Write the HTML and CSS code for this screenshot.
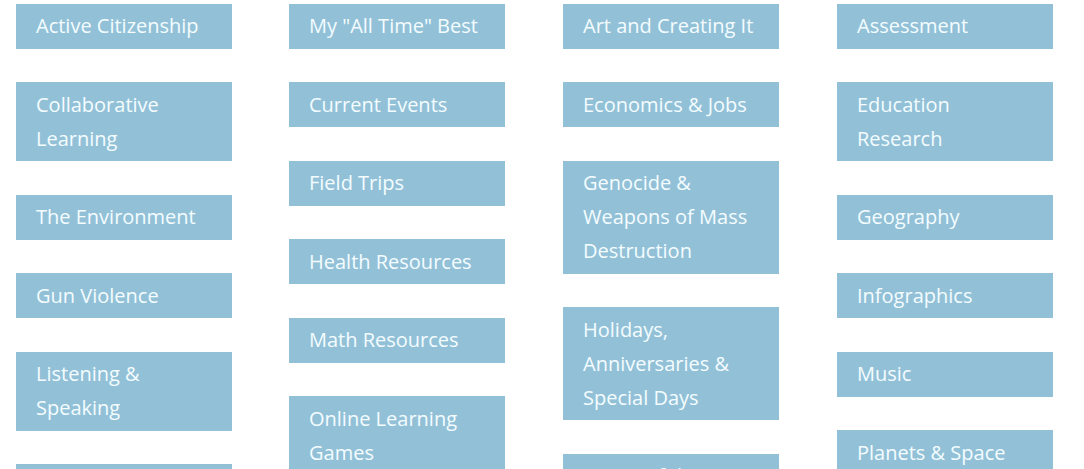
FILE: index.html
```html
<!DOCTYPE html>
<html lang="en">
<head>
<meta charset="utf-8">
<title>Topics</title>
<link rel="stylesheet" href="styles.css">
</head>
<body>
<div class="grid">
  <div class="col">
    <a class="tag">Active Citizenship</a>
    <a class="tag">Collaborative Learning</a>
    <a class="tag">The Environment</a>
    <a class="tag">Gun Violence</a>
    <a class="tag">Listening &amp; Speaking</a>
    <a class="tag">Media Literacy</a>
  </div>
  <div class="col">
    <a class="tag">My "All Time" Best</a>
    <a class="tag">Current Events</a>
    <a class="tag">Field Trips</a>
    <a class="tag">Health Resources</a>
    <a class="tag">Math Resources</a>
    <a class="tag">Online Learning Games</a>
  </div>
  <div class="col">
    <a class="tag">Art and Creating It</a>
    <a class="tag">Economics &amp; Jobs</a>
    <a class="tag">Genocide &amp; Weapons of Mass Destruction</a>
    <a class="tag">Holidays, Anniversaries &amp; Special Days</a>
    <a class="tag">Issues of the Millennium</a>
  </div>
  <div class="col">
    <a class="tag">Assessment</a>
    <a class="tag">Education Research</a>
    <a class="tag">Geography</a>
    <a class="tag">Infographics</a>
    <a class="tag">Music</a>
    <a class="tag">Planets &amp; Space</a>
  </div>
</div>
</body>
</html>
```

FILE: styles.css
```css
html, body {
  margin: 0;
  padding: 0;
  background: #ffffff;
  overflow: hidden;
}
body {
  font-family: "Open Sans", "Liberation Sans", sans-serif;
}
.grid {
  display: grid;
  grid-template-columns: 273px 274px 274px 216px;
  padding: 3.5px 0 0 16px;
  align-items: start;
}
.col {
  display: flex;
  flex-direction: column;
  gap: 33.5px;
  width: 216px;
}
.tag {
  display: block;
  background: #92c1d7;
  color: #f4fcff;
  font-size: 20px;
  line-height: 34px;
  padding: 5.5px 20px;
  text-decoration: none;
}
```
